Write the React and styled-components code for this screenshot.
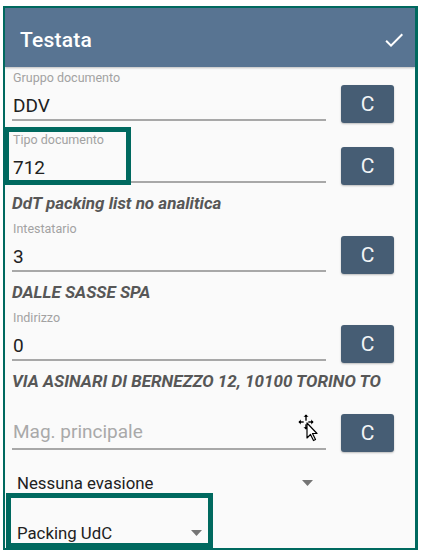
import React from "react";
import styled, { createGlobalStyle } from "styled-components";

const teal = "#00695f";

const Global = createGlobalStyle`
    html, body {
        margin: 0;
        padding: 0;
        background: #ffffff;
        font-family: Roboto, "Noto Sans", Arial, sans-serif;
    }
`;

const campi = [
    { etichetta: "Gruppo documento", valore: "DDV", top: 0 },
    { etichetta: "Tipo documento", valore: "712", top: 12, nota: "DdT packing list no analitica" },
    { etichetta: "Intestatario", valore: "3", top: 0, nota: "DALLE SASSE SPA" },
    { etichetta: "Indirizzo", valore: "0", top: 0, nota: "VIA ASINARI DI BERNEZZO 12, 10100 TORINO TO" },
];

const Freccia = () => (
    <svg width="11" height="6" viewBox="0 0 11 6">
        <path d="M0 0h11L5.5 6z" fill="#757575" />
    </svg>
);

const Cursore = () => (
    <svg width="24" height="30" viewBox="0 0 24 30">
        <g fill="#000" stroke="#fff" strokeWidth="0.6">
            <path d="M9 1l3 3h-2v4H8V4H6z" />
            <path d="M9 17l3-3h-2v-3H8v3H6z" />
            <path d="M1 9l3-3v2h3v2H4v2z" />
            <path d="M17 9l-3-3v2h-3v2h3v2z" />
        </g>
        <path d="M10 10v15l3.5-3.5 3 6 2-1-3-6H20z" fill="#fff" stroke="#000" strokeWidth="1.2" strokeLinejoin="round" />
    </svg>
);

const Testata = () => {
    return (
        <Pagina>
            <Global />
            <Cornice>
                <Intestazione>
                    <Titolo>Testata</Titolo>
                    <svg width="24" height="24" viewBox="0 0 24 24">
                        <path d="M9 16.17L4.83 12l-1.42 1.41L9 19 21 7l-1.41-1.41z" fill="#fff" />
                    </svg>
                </Intestazione>
                <Contenuto>
                    {campi.map((c) => (
                        <React.Fragment key={c.etichetta}>
                            <Riga $top={c.top}>
                                <Campo>
                                    <Etichetta>{c.etichetta}</Etichetta>
                                    <Valore>{c.valore}</Valore>
                                </Campo>
                                <Bottone>C</Bottone>
                            </Riga>
                            {c.nota && <Nota>{c.nota}</Nota>}
                        </React.Fragment>
                    ))}
                    <Riga $top={0}>
                        <Campo>
                            <Etichetta />
                            <Valore $segnaposto>Mag. principale</Valore>
                        </Campo>
                        <Bottone>C</Bottone>
                    </Riga>
                    <Selezione $larghezza={314}>
                        <span>Nessuna evasione</span>
                        <Freccia />
                    </Selezione>
                    <Selezione $larghezza={203}>
                        <span>Packing UdC</span>
                        <Freccia />
                    </Selezione>
                </Contenuto>
            </Cornice>
            <Evidenza $x={4} $y={127} $w={127} $h={58} />
            <Evidenza $x={6} $y={493} $w={207} $h={55} />
            <Puntatore>
                <Cursore />
            </Puntatore>
        </Pagina>
    );
};

const Pagina = styled.div`
    position: relative;
    width: 423px;
    height: 556px;
    overflow: hidden;
`;

const Cornice = styled.div`
    margin: 6px 0 0 3px;
    width: 415px;
    height: 544px;
    box-sizing: border-box;
    border: 2px solid ${teal};
    border-right-width: 3px;
    background: #fafafa;
    overflow: hidden;
`;

const Intestazione = styled.header`
    height: 59px;
    box-sizing: border-box;
    padding: 4px 9px 0 15px;
    display: flex;
    align-items: center;
    justify-content: space-between;
    background: #587492;
    box-shadow: 0 1px 2px rgba(0, 0, 0, 0.25);
    position: relative;
`;

const Titolo = styled.h1`
    margin: 0;
    font-size: 21px;
    font-weight: 500;
    color: #ffffff;
    letter-spacing: 0.2px;
`;

const Contenuto = styled.div`
    padding: 4px 21px 0 7px;
`;

const Riga = styled.div`
    display: flex;
    align-items: flex-end;
    gap: 15px;
    margin-top: ${(p) => p.$top}px;
`;

const Campo = styled.div`
    flex: 1;
    border-bottom: 2px solid #a8a8a8;
`;

const Etichetta = styled.div`
    height: 14px;
    font-size: 12.5px;
    line-height: 14px;
    color: #a2a2a2;
    padding-left: 1px;
`;

const Valore = styled.div`
    height: 34px;
    box-sizing: border-box;
    padding: ${(p) => (p.$segnaposto ? "6px" : "9px")} 0 0 1px;
    font-size: 19px;
    line-height: 24px;
    color: ${(p) => (p.$segnaposto ? "#a9a9a9" : "#212121")};
`;

const Bottone = styled.button`
    width: 53px;
    height: 38px;
    margin-bottom: -2px;
    border: none;
    border-radius: 3px;
    background: #465d74;
    box-shadow: 0 1px 2px rgba(0, 0, 0, 0.25);
    color: #f2f4f6;
    font-family: Roboto, sans-serif;
    font-size: 21px;
    padding: 0;
`;

const Nota = styled.div`
    margin: 10px 0 9px;
    font-size: 17px;
    line-height: 20px;
    font-weight: 700;
    font-style: italic;
    color: #575757;
    white-space: nowrap;
`;

const Selezione = styled.div`
    width: ${(p) => p.$larghezza}px;
    height: 50px;
    box-sizing: border-box;
    padding: 23px 13px 0 5px;
    display: flex;
    align-items: flex-start;
    justify-content: space-between;
    font-size: 16.8px;
    line-height: 20px;
    color: #212121;

    svg {
        margin-top: 7px;
    }
`;

const Evidenza = styled.div`
    position: absolute;
    left: ${(p) => p.$x}px;
    top: ${(p) => p.$y}px;
    width: ${(p) => p.$w}px;
    height: ${(p) => p.$h}px;
    box-sizing: border-box;
    border: 5px solid ${teal};
    pointer-events: none;
`;

const Puntatore = styled.div`
    position: absolute;
    left: 297px;
    top: 413px;
    line-height: 0;
`;

export default Testata;
